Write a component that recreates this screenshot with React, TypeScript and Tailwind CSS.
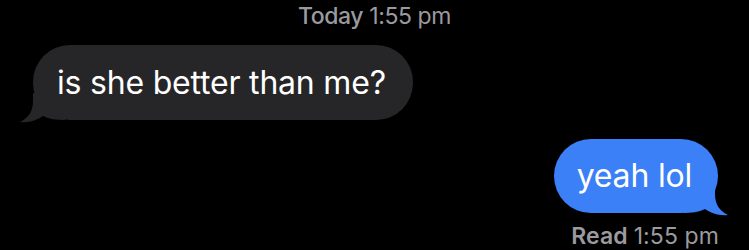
import React from "react";

export default function App() {
  const font = { fontFamily: "Inter, 'Liberation Sans', sans-serif" };
  return (
    <div className="w-[749px] h-[250px] bg-black overflow-hidden flex flex-col" style={font}>
      <div className="flex justify-center pt-[1px] text-[23px] leading-[30px] tracking-[-0.4px] text-[#9a9a9f]">
        <span className="font-medium">Today</span>
        <span className="ml-[6px]">1:55 pm</span>
      </div>
      <div className="flex pl-[33px] mt-[14px]">
        <div className="relative">
          <svg className="absolute left-[-14px] bottom-[-3px]" width="46" height="30" viewBox="0 0 46 30">
            <path d="M14 0 L14 8 C14 19 9 25 1 29 C 10 30 18 27 24 23 C 30 26 38 27 46 27 L46 0 Z" fill="#262628" />
          </svg>
          <div className="relative bg-[#262628] rounded-[37px] h-[75px] flex items-center pl-[24px] pr-[27px] text-white text-[32px] tracking-[-0.2px]">
            is she better than me?
          </div>
        </div>
      </div>
      <div className="flex justify-end pr-[31px] mt-[19px]">
        <div className="relative">
          <svg className="absolute right-[-11px] bottom-[-3px]" width="46" height="30" viewBox="0 0 46 30">
            <path d="M32 0 L32 8 C32 19 37 25 45 29 C 36 30 28 27 22 23 C 16 26 8 27 0 27 L0 0 Z" fill="#3b80f6" />
          </svg>
          <div className="relative bg-[#3b80f6] rounded-[37px] h-[74px] flex items-center pl-[23px] pr-[26px] text-white text-[32px] tracking-[-0.2px]">
            yeah lol
          </div>
        </div>
      </div>
      <div className="flex justify-end pr-[30px] mt-[9px] text-[23px] leading-[28px] tracking-[0.1px] text-[#9a9a9f]">
        <span className="font-semibold">Read</span>
        <span className="ml-[6px]">1:55 pm</span>
      </div>
    </div>
  );
}
